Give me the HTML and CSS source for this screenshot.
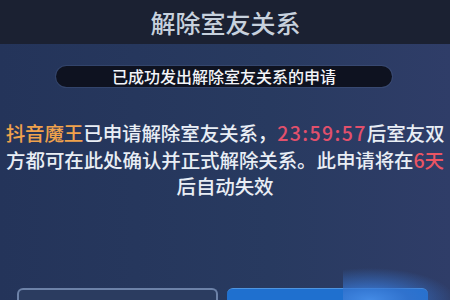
FILE: index.html
```html
<!DOCTYPE html>
<html lang="zh-CN">
<head>
<meta charset="utf-8">
<link rel="stylesheet" href="styles.css">
</head>
<body>
<div class="screen">
  <header class="header">
    <h1 class="title">解除室友关系</h1>
  </header>
  <main class="main">
    <div class="pill">已成功发出解除室友关系的申请</div>
    <p class="message"><span class="name">抖音魔王</span>已申请解除室友关系，<span class="time">23:59:57</span>后室友双<br>方都可在此处确认并正式解除关系。此申请将在<span class="days">6天</span><br>后自动失效</p>
    <div class="buttons">
      <div class="btn btn-cancel"></div>
      <div class="btn btn-ok"></div>
    </div>
  </main>
  <div class="glow"></div>
</div>
</body>
</html>
```

FILE: styles.css
```css
* { box-sizing: border-box; margin: 0; padding: 0; }
html, body { width: 450px; height: 300px; overflow: hidden; }
body {
  font-family: "Noto Sans CJK SC", "Noto Sans", sans-serif;
  background: #26355a;
}
.screen {
  position: relative;
  width: 450px;
  height: 300px;
  display: flex;
  flex-direction: column;
  background: linear-gradient(90deg, #24345a 0%, #283a60 60%, #2f3d68 100%);
}
.header {
  height: 44px;
  background: #1b2132;
  display: flex;
  justify-content: center;
  align-items: center;
  padding-left: 1px;
}
.title {
  font-size: 25px;
  font-weight: 500;
  color: #c7d1dd;
  line-height: 1;
}
.main {
  flex: 1;
  display: flex;
  flex-direction: column;
  align-items: center;
}
.pill {
  margin-top: 22px;
  width: 336px;
  height: 21px;
  border-radius: 11px;
  background: #0e1220;
  box-shadow: 0 0 0 1px rgba(90, 110, 150, 0.25);
  color: #f2f4f8;
  font-size: 16px;
  font-weight: 500;
  line-height: 21px;
  text-align: center;
  margin-left: -2px;
}
.message {
  margin-top: 33px;
  width: 450px;
  text-align: center;
  font-size: 19.5px;
  font-weight: 500;
  line-height: 26.5px;
  color: #e9eef5;
  letter-spacing: -0.1px;
}
.name { color: #f0a24c; }
.time { color: #e2506c; letter-spacing: 1.4px; }
.days { color: #ea5563; }
.buttons {
  margin-top: auto;
  display: flex;
  gap: 9px;
  height: 12px;
  width: 450px;
  padding-left: 17px;
}
.btn {
  width: 201px;
  height: 12px;
  border-radius: 6px 6px 0 0;
}
.btn-cancel {
  background: #2b3c60;
  border: 2px solid #6d82a8;
  border-bottom: none;
}
.btn-ok {
  background: #1f70cf;
  border-top: 1px solid #4f95e0;
}
.glow {
  position: absolute;
  left: 343px;
  top: 268px;
  width: 107px;
  height: 32px;
  background: radial-gradient(ellipse 80% 100% at 25% 100%, rgba(70, 140, 230, 0.95) 0%, rgba(55, 115, 205, 0.7) 45%, rgba(40, 70, 130, 0) 100%);
}
```
